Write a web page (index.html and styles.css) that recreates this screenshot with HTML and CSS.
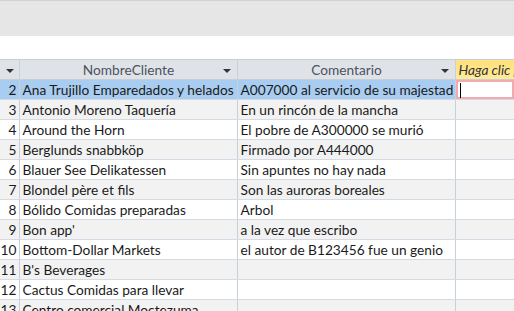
FILE: index.html
```html
<!DOCTYPE html>
<html>
<head>
	<meta charset="utf-8">
	<link rel="stylesheet" href="styles.css">
</head>
<body>
	<div class="ribbon"></div>
	<div class="spacer"></div>
	<table class="grid">
		<colgroup>
			<col class="c_id">
			<col class="c_nombre">
			<col class="c_coment">
			<col class="c_nuevo">
		</colgroup>
		<tr class="cabecera">
			<th class="h_id"><span class="flecha"></span></th>
			<th><span class="titulo">NombreCliente</span><span class="flecha"></span></th>
			<th><span class="titulo">Comentario</span><span class="flecha"></span></th>
			<th class="h_nuevo">Haga clic para agregar</th>
		</tr>
		<tr class="sel">
			<td class="num">2</td>
			<td>Ana Trujillo Emparedados y helados</td>
			<td>A007000 al servicio de su majestad</td>
			<td class="edit"><span class="cursor"></span></td>
		</tr>
		<tr class="par">
			<td class="num">3</td>
			<td>Antonio Moreno Taquería</td>
			<td>En un rincón de la mancha</td>
			<td></td>
		</tr>
		<tr>
			<td class="num">4</td>
			<td>Around the Horn</td>
			<td>El pobre de A300000 se murió</td>
			<td></td>
		</tr>
		<tr class="par">
			<td class="num">5</td>
			<td>Berglunds snabbköp</td>
			<td>Firmado por A444000</td>
			<td></td>
		</tr>
		<tr>
			<td class="num">6</td>
			<td>Blauer See Delikatessen</td>
			<td>Sin apuntes no hay nada</td>
			<td></td>
		</tr>
		<tr class="par">
			<td class="num">7</td>
			<td>Blondel père et fils</td>
			<td>Son las auroras boreales</td>
			<td></td>
		</tr>
		<tr>
			<td class="num">8</td>
			<td>Bólido Comidas preparadas</td>
			<td>Arbol</td>
			<td></td>
		</tr>
		<tr class="par">
			<td class="num">9</td>
			<td>Bon app'</td>
			<td>a la vez que escribo</td>
			<td></td>
		</tr>
		<tr>
			<td class="num">10</td>
			<td>Bottom-Dollar Markets</td>
			<td>el autor de B123456 fue un genio</td>
			<td></td>
		</tr>
		<tr class="par">
			<td class="num">11</td>
			<td>B's Beverages</td>
			<td></td>
			<td></td>
		</tr>
		<tr>
			<td class="num">12</td>
			<td>Cactus Comidas para llevar</td>
			<td></td>
			<td></td>
		</tr>
		<tr class="par">
			<td class="num">13</td>
			<td>Centro comercial Moctezuma</td>
			<td></td>
			<td></td>
		</tr>
	</table>
</body>
</html>
```
FILE: styles.css
```css
body {
	margin: 0;
	font-family: Lato, "Open Sans", sans-serif;
	font-size: 13.7px;
	color: #1a1a1a;
	background: white;
	overflow: hidden;
}

.ribbon {
	height: 35px;
	background: #e6e6e6;
	border-top: 1px solid #d2d2d2;
}

.spacer {
	height: 23px;
}

.grid {
	border-collapse: collapse;
	table-layout: fixed;
	width: 514px;
}

.c_id { width: 19px; }
.c_nombre { width: 218px; }
.c_coment { width: 218px; }
.c_nuevo { width: 59px; }

.grid th,
.grid td {
	height: 19px;
	padding: 0 2px 0 3px;
	border: 1px solid #d5dbe5;
	border-left: none;
	border-right: 1px solid #c8d0dc;
	white-space: nowrap;
	overflow: hidden;
	text-align: left;
	line-height: 19px;
}

.grid th {
	background: #dfe3e8;
	font-weight: normal;
	color: #4b5262;
	text-align: center;
	position: relative;
	border-top: 1px solid #c9ced6;
	border-bottom: 1px solid #c9ced6;
	height: 19px;
}

.flecha {
	position: absolute;
	right: 6px;
	top: 9px;
	border-left: 4px solid transparent;
	border-right: 4px solid transparent;
	border-top: 4px solid #333;
}

.h_id .flecha {
	right: 5px;
}

.grid th.h_nuevo {
	background: linear-gradient(#ffe07a, #ffeb9c);
	font-style: italic;
	text-align: left;
	color: #333;
	border-right: none;
}

.grid td.num {
	text-align: right;
	padding: 0 2px 0 0;
}

.par td {
	background: #f2f2f2;
}

.sel td {
	background: #a8cdf1;
}

.sel td.edit {
	background: white;
	box-shadow: inset 0 0 0 2px #f4a9ab;
	position: relative;
}

.cursor {
	position: absolute;
	left: 4px;
	top: 3px;
	width: 1px;
	height: 15px;
	background: black;
}
```
